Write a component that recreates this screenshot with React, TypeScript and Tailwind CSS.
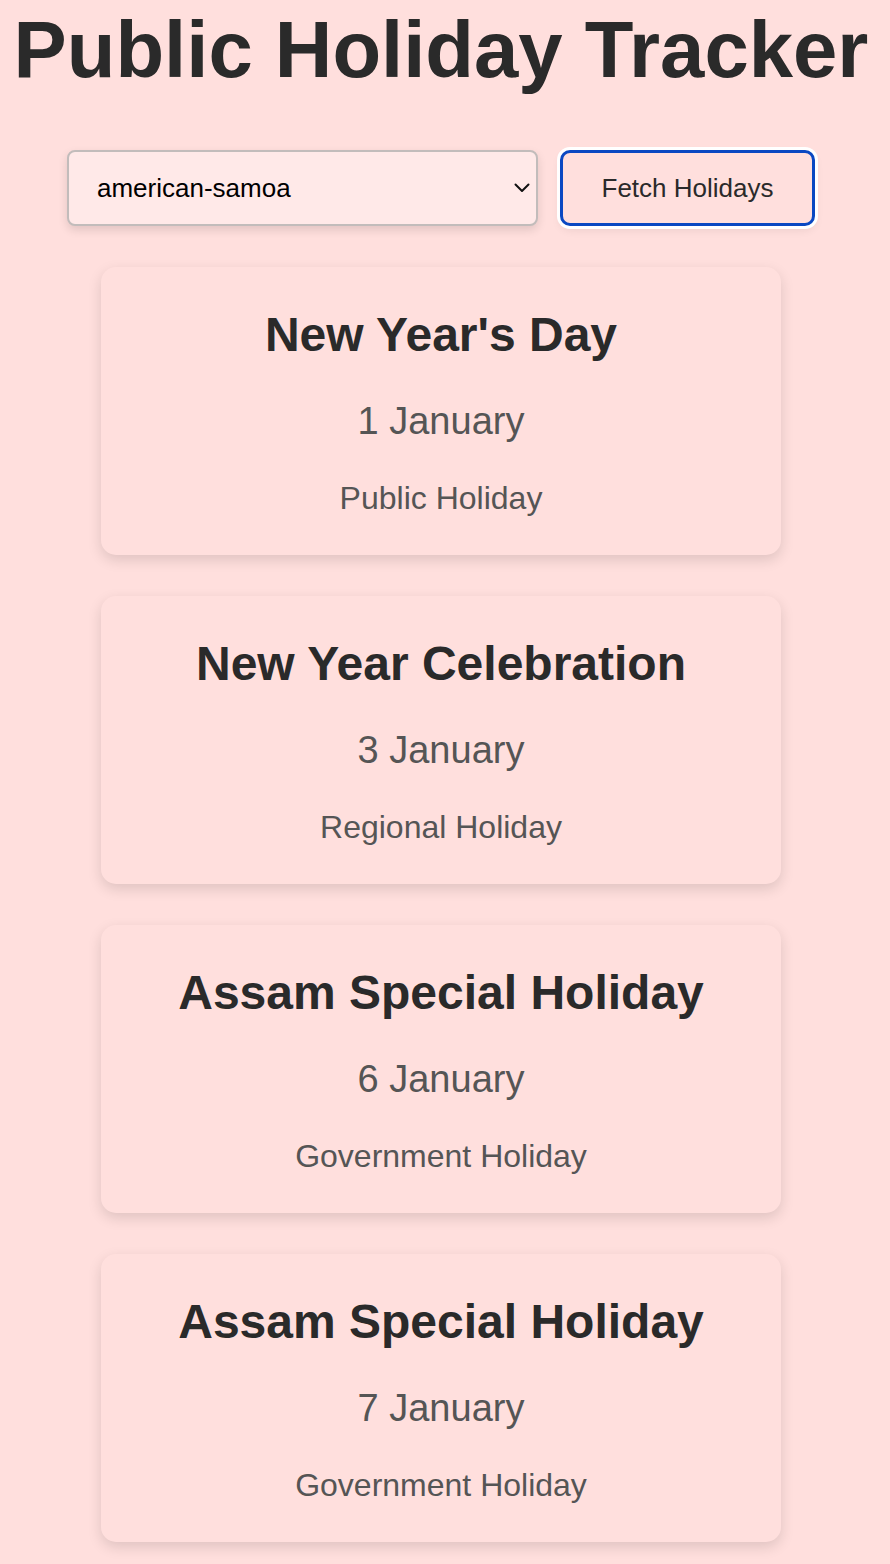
import React from "react";

const holidays = [
  { name: "New Year's Day", date: "1 January", type: "Public Holiday" },
  { name: "New Year Celebration", date: "3 January", type: "Regional Holiday" },
  { name: "Assam Special Holiday", date: "6 January", type: "Government Holiday" },
  { name: "Assam Special Holiday", date: "7 January", type: "Government Holiday" },
];

export default function App() {
  return (
    <div
      className="min-h-screen w-full bg-[#ffdfdd] pb-[22px]"
      style={{ fontFamily: '"Liberation Sans", Arial, Helvetica, sans-serif' }}
    >
      <div className="w-[882px] flex flex-col items-center pt-[4px]">
        <h1 className="text-[79.7px] leading-[92px] font-bold text-[#2a2a2a] m-0 whitespace-nowrap">
          Public Holiday Tracker
        </h1>

        <div className="mt-[54px] flex items-center gap-[22px]">
          <div className="relative w-[471px] h-[76px]">
            <select
              defaultValue="american-samoa"
              className="appearance-none w-full h-full rounded-[8px] border-2 border-[#c2bcbb] bg-[#ffe9e8] pl-[28px] pr-[40px] text-[26px] text-black shadow-[0_4px_10px_rgba(0,0,0,0.12)] outline-none"
              style={{ fontFamily: '"Liberation Sans", Arial, sans-serif' }}
            >
              <option value="american-samoa">american-samoa</option>
              <option value="india">india</option>
            </select>
            <svg
              className="absolute right-[8px] top-[33px] pointer-events-none"
              width="16"
              height="10"
              viewBox="0 0 16 10"
              fill="none"
            >
              <path d="M1.5 1.5 L8 8 L14.5 1.5" stroke="#111" strokeWidth="2" strokeLinecap="round" strokeLinejoin="round" />
            </svg>
          </div>
          <button
            className="w-[255px] h-[76px] rounded-[10px] border-[3px] border-[#0a48c2] bg-[#ffdfdd] text-[26px] text-[#2a2a2a] shadow-[0_0_0_3px_#ffffff,0_4px_10px_rgba(0,0,0,0.08)]"
          >
            Fetch Holidays
          </button>
        </div>

        <div className="mt-[41px] flex flex-col gap-[41px]">
          {holidays.map((h, i) => (
            <div
              key={i}
              className="w-[680px] h-[288px] rounded-[15px] bg-[#ffdfdd] shadow-[0_5px_14px_rgba(0,0,0,0.13)] flex flex-col items-center pt-[40px]"
            >
              <h2 className="text-[48px] leading-[55px] font-bold text-[#2a2a2a] m-0">{h.name}</h2>
              <p className="mt-[37px] text-[38px] leading-[44px] text-[#555555] m-0">{h.date}</p>
              <p className="mt-[37px] text-[32px] leading-[37px] text-[#555555] m-0">{h.type}</p>
            </div>
          ))}
        </div>
      </div>
    </div>
  );
}
